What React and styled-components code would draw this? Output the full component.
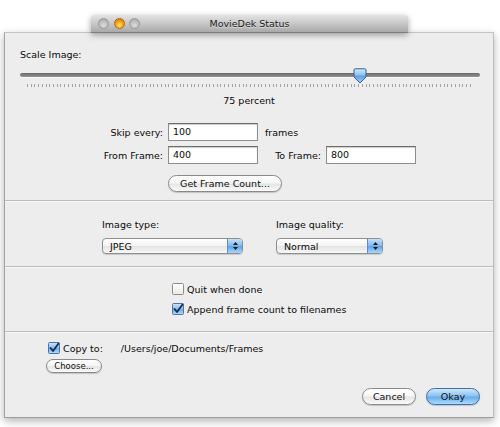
import React from "react";
import styled, { createGlobalStyle } from "styled-components";

const Global = createGlobalStyle`
  html, body { margin: 0; padding: 0; background: #ffffff; }
  body { font-family: "DejaVu Sans", "Liberation Sans", sans-serif; font-size: 9.5px; color: #0a0a0a; }
  * { box-sizing: border-box; }
`;

const Page = styled.div`
  width: 500px;
  height: 427px;
  padding-top: 15px;
  overflow: hidden;
`;

const TitleBar = styled.div`
  position: relative;
  z-index: 2;
  margin-left: 91px;
  width: 317px;
  height: 18px;
  display: grid;
  grid-template-columns: 1fr auto 1fr;
  align-items: center;
  background: linear-gradient(#e4e4e4, #c4c4c4 55%, #a9a9a9);
  border-bottom: 1px solid #7d7d7d;
  box-shadow: 0 2px 6px rgba(0, 0, 0, 0.35);
  border-radius: 3px 3px 0 0;
`;

const Lights = styled.div`
  display: flex;
  gap: 4.5px;
  padding-left: 7px;
`;

const Light = styled.span`
  width: 11px;
  height: 11px;
  border-radius: 50%;
  background: ${(p) =>
    p.$on
      ? "radial-gradient(circle at 50% 70%, #ffe36a 0%, #f6a51c 45%, #c66a0b 100%)"
      : "radial-gradient(circle at 50% 70%, #dcdcdc 0%, #b9b9b9 60%, #9b9b9b 100%)"};
  border: 1px solid ${(p) => (p.$on ? "#b2670f" : "#9a9a9a")};
`;

const Title = styled.span`
  font-size: 9.5px;
  color: #1a1a1a;
  text-shadow: 0 1px 0 rgba(255, 255, 255, 0.5);
`;

const Sheet = styled.div`
  position: relative;
  z-index: 1;
  margin-top: -1px;
  margin-left: 4px;
  width: 490px;
  height: 386px;
  background: #ededed;
  border-top: 1px solid #c4c4c4;
  border-left: 1px solid #a3a3a3;
  border-right: 1px solid #bdbdbd;
  border-bottom: 1px solid #9c9c9c;
  box-shadow: 0 3px 8px rgba(0, 0, 0, 0.3);
  display: flex;
  flex-direction: column;
`;

const Section = styled.div`
  flex: ${(p) => (p.$h ? `0 0 ${p.$h}px` : "1")};
  padding-top: ${(p) => p.$pt || 0}px;
  display: flex;
  flex-direction: column;
  border-top: ${(p) => (p.$divider ? "1px solid #bcbcbc" : "none")};
  box-shadow: ${(p) => (p.$divider ? "inset 0 1px 0 #f8f8f8" : "none")};
`;

const Label = styled.div`
  line-height: 12px;
  height: 12px;
  white-space: nowrap;
  margin-left: ${(p) => p.$ml || 0}px;
`;

const SliderWrap = styled.div`
  position: relative;
  margin-top: 5px;
  margin-left: 15px;
  width: 460px;
  height: 22px;
`;

const Track = styled.div`
  position: absolute;
  left: 0;
  right: 0;
  top: 7px;
  height: 4px;
  border-radius: 2px;
  background: linear-gradient(#6a6a6a, #939393);
  box-shadow: 0 1px 0 #fafafa;
`;

const Ticks = styled.div`
  position: absolute;
  left: 7px;
  right: 7px;
  top: 18px;
  height: 3px;
  background: repeating-linear-gradient(
    to right,
    #a2a2a2 0,
    #a2a2a2 1px,
    transparent 1px,
    transparent 3.72px
  );
`;

const Knob = styled.svg`
  position: absolute;
  top: 2px;
  left: ${(p) => p.$left}px;
`;

const Percent = styled.div`
  margin-top: 7px;
  text-align: center;
  line-height: 12px;
`;

const FormRow = styled.div`
  display: flex;
  align-items: center;
  height: 18px;
  margin-top: ${(p) => p.$mt}px;
`;

const RowLabel = styled.div`
  width: ${(p) => p.$w}px;
  margin-left: ${(p) => p.$ml || 0}px;
  margin-right: 5px;
  text-align: right;
  white-space: nowrap;
`;

const Field = styled.div`
  width: 90px;
  height: 18px;
  background: #fff;
  border: 1px solid #8e8e8e;
  border-top-color: #6c6c6c;
  box-shadow: inset 0 1px 1px rgba(0, 0, 0, 0.2);
  padding: 0 4px;
  line-height: 16px;
`;

const After = styled.span`
  margin-left: 7px;
`;

const Pill = styled.div`
  height: ${(p) => p.$h || 17}px;
  width: ${(p) => p.$w}px;
  margin-left: ${(p) => p.$ml || 0}px;
  margin-top: ${(p) => p.$mt || 0}px;
  border-radius: ${(p) => (p.$h || 17) / 2}px;
  border: 1px solid ${(p) => (p.$default ? "#3d6fa8" : "#8a8a8a")};
  background: ${(p) =>
    p.$default
      ? "linear-gradient(#cfe7fb 0%, #8ec3f0 45%, #6aaee9 55%, #a9dcff 100%)"
      : "linear-gradient(#ffffff 0%, #f6f6f6 45%, #e6e6e6 55%, #fafafa 100%)"};
  box-shadow: 0 1px 1px rgba(0, 0, 0, 0.18);
  display: flex;
  align-items: center;
  justify-content: center;
  font-size: ${(p) => p.$fs || 9.5}px;
  white-space: nowrap;
  color: #111;
`;

const PopRow = styled.div`
  display: flex;
  gap: 33px;
  margin-left: 97px;
`;

const PopCol = styled.div`
  display: flex;
  flex-direction: column;
  gap: 7px;
`;

const Popup = styled.div`
  width: ${(p) => p.$w}px;
  height: 16px;
  border-radius: 4px;
  border: 1px solid #8f8f8f;
  background: linear-gradient(#ffffff, #f3f3f3 50%, #e4e4e4 52%, #f7f7f7);
  box-shadow: 0 1px 1px rgba(0, 0, 0, 0.15);
  display: flex;
  align-items: center;
  overflow: hidden;
`;

const PopText = styled.span`
  flex: 1;
  padding-left: 7px;
`;

const PopArrow = styled.div`
  width: 15px;
  height: 100%;
  border-left: 1px solid #5b8fcc;
  background: linear-gradient(#c6e1fa, #7fb7ec 50%, #5fa3e6 52%, #a8d6fb);
  display: flex;
  align-items: center;
  justify-content: center;
`;

const CheckList = styled.div`
  display: flex;
  flex-direction: column;
  gap: 8px;
  margin-left: ${(p) => p.$ml}px;
`;

const CheckRow = styled.div`
  display: flex;
  align-items: center;
  gap: 3px;
  height: 12px;
  white-space: nowrap;
`;

const Path = styled.span`
  margin-left: 15px;
`;

const ButtonRow = styled.div`
  display: flex;
  justify-content: flex-end;
  gap: 10px;
  margin-top: 15px;
  padding-right: 13px;
`;

function Check({ checked }) {
  const id = checked ? "cbOn" : "cbOff";
  return (
    <svg width="12" height="12" viewBox="0 0 12 12">
      <defs>
        <linearGradient id={id} x1="0" y1="0" x2="0" y2="1">
          {checked ? (
            <>
              <stop offset="0" stopColor="#cfe6fb" />
              <stop offset="0.5" stopColor="#86bdf0" />
              <stop offset="0.55" stopColor="#6aaeea" />
              <stop offset="1" stopColor="#b4defd" />
            </>
          ) : (
            <>
              <stop offset="0" stopColor="#ffffff" />
              <stop offset="1" stopColor="#e9e9e9" />
            </>
          )}
        </linearGradient>
      </defs>
      <rect
        x="0.5"
        y="0.5"
        width="11"
        height="11"
        rx="1"
        fill={`url(#${id})`}
        stroke={checked ? "#4a76a8" : "#8d8d8d"}
      />
      {checked && (
        <path
          d="M2.5 6 L5 9 L10.5 1.5"
          fill="none"
          stroke="#1b2a4a"
          strokeWidth="1.8"
          strokeLinecap="round"
          strokeLinejoin="round"
        />
      )}
    </svg>
  );
}

function Arrows() {
  return (
    <svg width="7" height="10" viewBox="0 0 7 10">
      <path d="M3.5 1 L6 4 H1 Z" fill="#1a1a1a" />
      <path d="M3.5 9 L6 6 H1 Z" fill="#1a1a1a" />
    </svg>
  );
}

export default function App() {
  return (
    <>
      <Global />
      <Page>
        <TitleBar>
          <Lights>
            <Light />
            <Light $on />
            <Light />
          </Lights>
          <Title>MovieDek Status</Title>
          <span />
        </TitleBar>
        <Sheet>
          <Section $h={167} $pt={16}>
            <Label $ml={15}>Scale Image:</Label>
            <SliderWrap>
              <Track />
              <Ticks />
              <Knob $left={333} width="14" height="16" viewBox="0 0 14 16">
                <defs>
                  <linearGradient id="knob" x1="0" y1="0" x2="0" y2="1">
                    <stop offset="0" stopColor="#d8ecfd" />
                    <stop offset="0.45" stopColor="#8cc1f2" />
                    <stop offset="0.5" stopColor="#5c9fe4" />
                    <stop offset="1" stopColor="#9fd2fb" />
                  </linearGradient>
                </defs>
                <path
                  d="M1 2 Q1 0.8 2.2 0.8 H11.8 Q13 0.8 13 2 V9 L7 15 L1 9 Z"
                  fill="url(#knob)"
                  stroke="#355f96"
                />
              </Knob>
            </SliderWrap>
            <Percent>75 percent</Percent>
            <FormRow $mt={16}>
              <RowLabel $w={158}>Skip every:</RowLabel>
              <Field>100</Field>
              <After>frames</After>
            </FormRow>
            <FormRow $mt={5}>
              <RowLabel $w={158}>From Frame:</RowLabel>
              <Field>400</Field>
              <RowLabel $w={48} $ml={15}>
                To Frame:
              </RowLabel>
              <Field>800</Field>
            </FormRow>
            <Pill $w={114} $ml={163} $mt={11}>
              Get Frame Count...
            </Pill>
          </Section>
          <Section $h={66} $pt={18} $divider>
            <PopRow>
              <PopCol>
                <Label>Image type:</Label>
                <Popup $w={141}>
                  <PopText>JPEG</PopText>
                  <PopArrow>
                    <Arrows />
                  </PopArrow>
                </Popup>
              </PopCol>
              <PopCol>
                <Label>Image quality:</Label>
                <Popup $w={107}>
                  <PopText>Normal</PopText>
                  <PopArrow>
                    <Arrows />
                  </PopArrow>
                </Popup>
              </PopCol>
            </PopRow>
          </Section>
          <Section $h={65} $pt={16} $divider>
            <CheckList $ml={167}>
              <CheckRow>
                <Check />
                Quit when done
              </CheckRow>
              <CheckRow>
                <Check checked />
                Append frame count to filenames
              </CheckRow>
            </CheckList>
          </Section>
          <Section $pt={10} $divider>
            <CheckList $ml={43}>
              <CheckRow>
                <Check checked />
                Copy to:
                <Path>/Users/joe/Documents/Frames</Path>
              </CheckRow>
            </CheckList>
            <Pill $w={56} $h={14} $ml={41} $mt={5} $fs={8.5}>
              Choose...
            </Pill>
            <ButtonRow>
              <Pill $w={54}>Cancel</Pill>
              <Pill $w={54} $default>
                Okay
              </Pill>
            </ButtonRow>
          </Section>
        </Sheet>
      </Page>
    </>
  );
}
